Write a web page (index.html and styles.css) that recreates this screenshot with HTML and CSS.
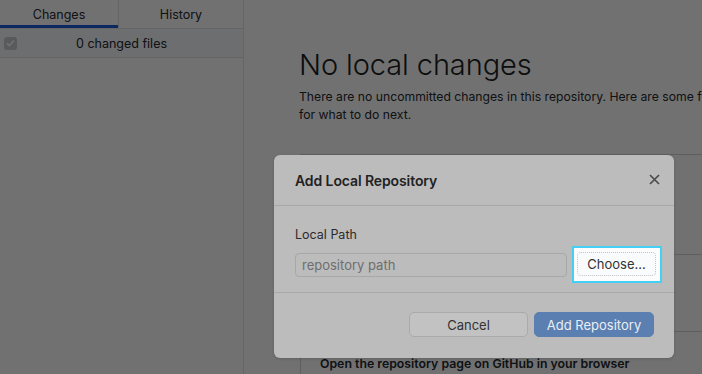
FILE: index.html
```html
<!DOCTYPE html>
<html>
<head>
<meta charset="utf-8">
<link rel="stylesheet" href="styles.css">
</head>
<body>
<div class="app">
  <aside class="sidebar">
    <div class="tabs">
      <div class="tab active">Changes</div>
      <div class="tab">History</div>
    </div>
    <div class="files-row">
      <span class="check"><svg width="9" height="8" viewBox="0 0 9 8"><path d="M1 4.2 L3.4 6.5 L8 1.5" fill="none" stroke="#fff" stroke-width="1.6"/></svg></span>
      <span class="files-label">0 changed files</span>
    </div>
  </aside>
  <main class="main">
    <h1 class="title">No local changes</h1>
    <p class="lead">There are no uncommitted changes in this repository. Here are some friendly suggestions<br>for what to do next.</p>
    <div class="actions">
      <div class="action"></div>
      <div class="action"></div>
      <div class="action"><span class="action-title">Open the repository page on GitHub in your browser</span></div>
    </div>
  </main>
</div>
<div class="overlay"></div>
<div class="dialog">
  <div class="dialog-header">
    <span class="dialog-title">Add Local Repository</span>
    <span class="close"><svg width="11" height="11" viewBox="0 0 11 11"><path d="M1 1 L10 10 M10 1 L1 10" stroke="#4a4a4a" stroke-width="1.6"/></svg></span>
  </div>
  <div class="dialog-body">
    <label class="field-label">Local Path</label>
    <div class="path-row">
      <input class="path-input" type="text" placeholder="repository path">
      <div class="focus-ring"><button class="choose">Choose…</button></div>
    </div>
  </div>
  <div class="dialog-footer">
    <button class="btn">Cancel</button>
    <button class="btn primary">Add Repository</button>
  </div>
</div>
</body>
</html>
```

FILE: styles.css
```css
* { box-sizing: border-box; }
html, body { margin: 0; padding: 0; }
body {
  width: 702px;
  height: 374px;
  overflow: hidden;
  font-family: Inter, "Noto Sans", sans-serif;
  background: #fff;
  color: #24292e;
  position: relative;
}
.app { display: flex; height: 374px; }
.sidebar {
  width: 244px;
  flex: none;
  border-right: 1px solid #e1e4e8;
  display: flex;
  flex-direction: column;
}
.tabs { display: flex; height: 29px; border-bottom: 1px solid #e1e4e8; }
.tab {
  flex: 1;
  display: flex;
  align-items: center;
  justify-content: center;
  font-size: 12.5px;
  color: #24292e;
  padding-top: 1px;
}
.tab.active {
  flex: none;
  width: 119px;
  border-right: 1px solid #e1e4e8;
  box-shadow: inset 0 -3px 0 #1d5ad9;
}
.files-row {
  height: 29px;
  display: flex;
  align-items: center;
  background: #f6f8fa;
  border-bottom: 1px solid #e1e4e8;
  padding-left: 4px;
}
.check {
  width: 13px; height: 13px;
  border-radius: 3px;
  background: #c8cbcf;
  display: flex; align-items: center; justify-content: center;
}
.files-label { flex: 1; text-align: center; font-size: 12.5px; padding-right: 17px; }
.main { flex: 1; padding: 46px 0 0 55px; overflow: hidden; }
.title {
  margin: 0;
  font-weight: 300;
  font-size: 29px;
  letter-spacing: -0.1px;
  line-height: 38px;
  color: #1b1f23;
}
.lead {
  margin: 4px 0 0 0;
  font-size: 12.2px;
  line-height: 18px;
  white-space: nowrap;
  color: #24292e;
}
.actions {
  margin-top: 30px;
  margin-left: 1px;
  border: 1px solid #d1d5da;
  border-right: none;
  width: 420px;
}
.action { height: 100px; border-bottom: 1px solid #d1d5da; }
.action:nth-child(2) { height: 77px; }
.action:last-child { border-bottom: none; height: 60px; padding: 20px 0 0 19px; }
.action-title { font-weight: 600; font-size: 12.3px; color: #24292e; white-space: nowrap; }
.overlay {
  position: absolute;
  inset: 0;
  background: rgba(0, 0, 0, 0.557);
}
.dialog {
  position: absolute;
  left: 274px;
  top: 155px;
  width: 400px;
  height: 203px;
  background: #bcbcbc;
  border-radius: 6px;
  display: flex;
  flex-direction: column;
  box-shadow: 0 1px 3px rgba(0,0,0,0.15);
}
.dialog-header {
  height: 51px;
  border-bottom: 1px solid #a9a9a9;
  display: flex;
  align-items: center;
  justify-content: space-between;
  padding: 0 14px 0 21px;
}
.dialog-title { font-size: 14px; font-weight: 600; color: #222; letter-spacing: -0.1px; }
.close { display: flex; width: 11px; height: 11px; margin-top: -2px; }
.dialog-body {
  height: 87px;
  border-bottom: 1px solid #a9a9a9;
  padding: 21px 11px 0 21px;
}
.field-label { display: block; font-size: 12.5px; color: #2b2b2b; line-height: 16px; }
.path-row { display: flex; align-items: center; margin-top: 3px; }
.path-input {
  width: 272px;
  height: 24px;
  border: 1px solid #a8a8a8;
  border-radius: 4px;
  background: #bcbcbc;
  font-family: inherit;
  font-size: 13px;
  padding: 0 6px;
  color: #333;
  outline: none;
}
.path-input::placeholder { color: #6e6e6e; }
.focus-ring {
  margin-left: 5px;
  width: 90px;
  height: 37px;
  background: #fcfcfd;
  border: 2px solid #44d0f5;
  padding: 4px 4px 5px 3px;
  display: flex;
}
.choose {
  flex: 1;
  border: 1px dotted #c4c4c4;
  border-radius: 4px;
  background: #fafbfc;
  font-family: inherit;
  font-size: 13px;
  color: #333;
  padding: 0;
}
.dialog-footer {
  flex: 1;
  display: flex;
  justify-content: flex-end;
  align-items: flex-start;
  padding: 19px 20px 0 0;
  gap: 6px;
}
.btn {
  width: 119px;
  height: 25px;
  border: 1px solid #aaaaaa;
  border-radius: 5px;
  background: #c2c2c2;
  font-family: inherit;
  font-size: 13px;
  color: #333;
  padding: 0;
}
.btn.primary {
  width: 120px;
  background: #5a7fb0;
  border-color: #5a7fb0;
  color: #e9eef5;
}
```
